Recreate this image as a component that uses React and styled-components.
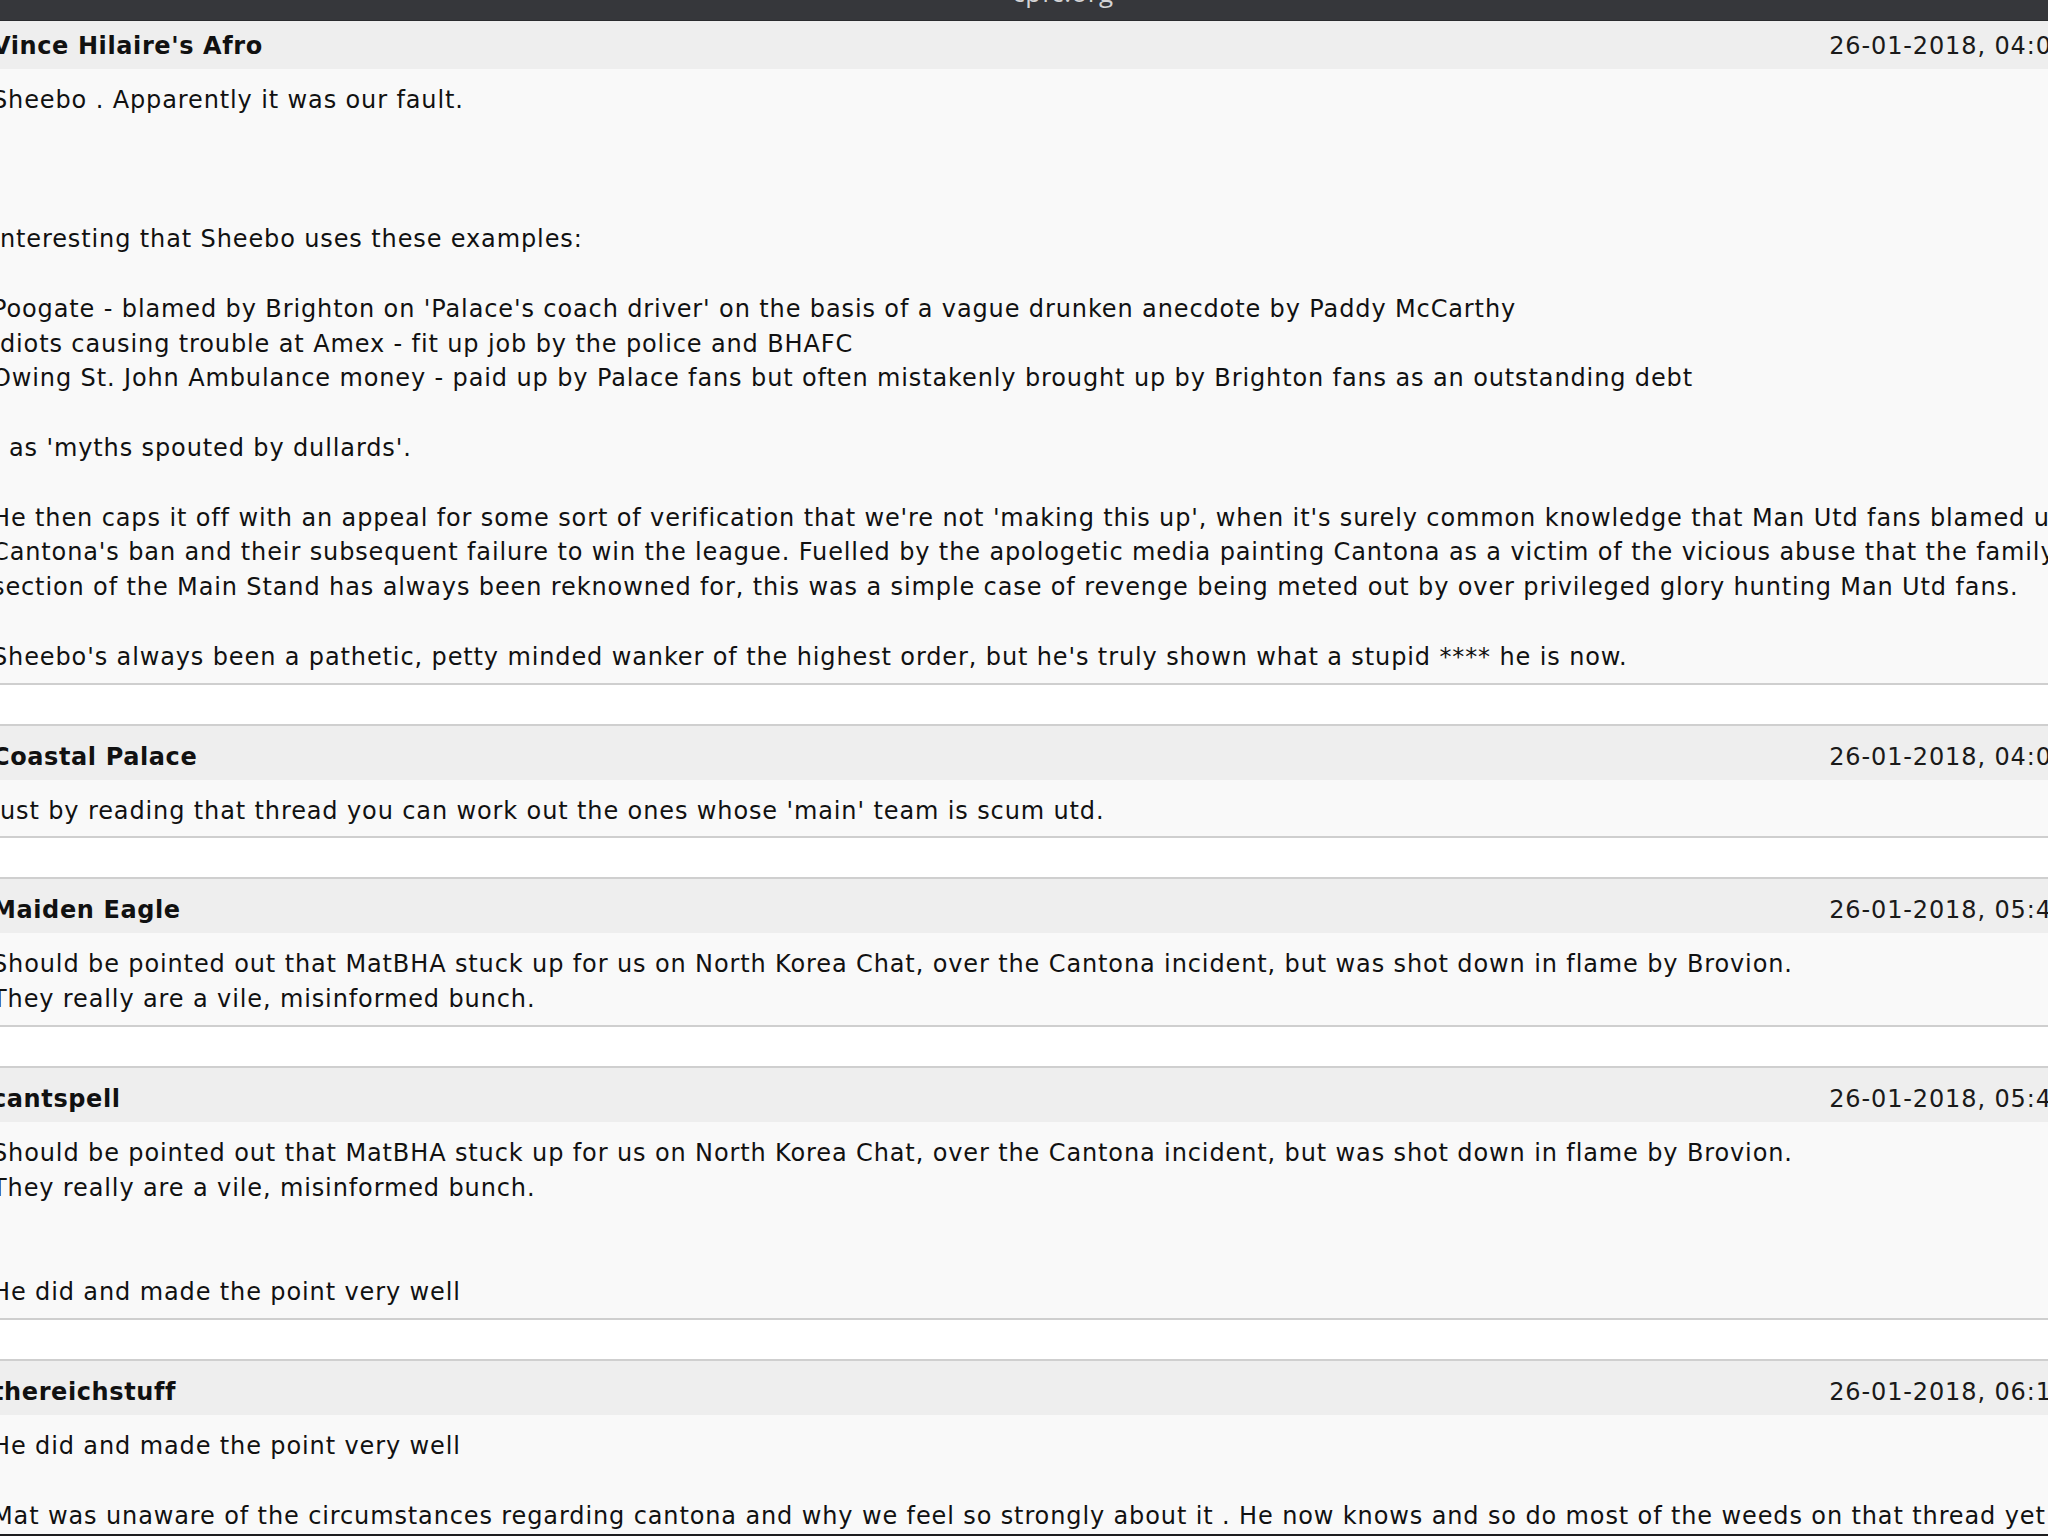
import React from "react";
import styled, { createGlobalStyle } from "styled-components";

const Global = createGlobalStyle`
  html, body {
    margin: 0;
    padding: 0;
    background: #ffffff;
    overflow: hidden;
  }
`

const Page = styled("div")`
  position: relative;
  width: 100vw;
  height: 100vh;
  overflow: hidden;
  font-family: "DejaVu Sans", Verdana, sans-serif;
  font-size: 24px;
  letter-spacing: 0.88px;
  color: #111;

  &::after {
    content: "";
    position: absolute;
    left: 0;
    right: 0;
    bottom: 0;
    height: 2px;
    background: #1e1e20;
  }
`
const TitleBar = styled("div")`
  position: relative;
  z-index: 2;
  height: 20px;
  background: #36373b;
  border-bottom: 1px solid #2a2b2e;
  overflow: hidden;
  text-align: center;
`
const SiteName = styled("div")`
  margin-top: -23px;
  font-family: "Open Sans", "DejaVu Sans", sans-serif;
  font-size: 26px;
  letter-spacing: 0.6px;
  line-height: 30px;
  color: #d4d4d6;
  padding-left: 78px;
`
const Thread = styled("div")`
  margin: -8px -28px 0 -16px;
`
const Post = styled("div")`
  border-top: 2px solid #cfcfcf;
  border-bottom: 2px solid #cfcfcf;
  margin-bottom: 39px;
`
const Head = styled("div")`
  display: flex;
  justify-content: space-between;
  background: #eeeeee;
  padding: 14px 8px 5px;
  line-height: 35px;
  white-space: nowrap;
`
const Name = styled("span")`
  font-weight: bold;
  letter-spacing: 0.6px;
`
const When = styled("span")`
  color: #1a1a1a;
`
const Body = styled("div")`
  background: #f9f9f9;
  padding: 14px 8px 8px;
  line-height: 34.8px;
  white-space: nowrap;
`
const Line = styled("div")`
  min-height: 34.8px;
`

const posts = [
  {
    name: "Vince Hilaire's Afro",
    date: "26-01-2018, 04:02",
    lines: [
      "Sheebo . Apparently it was our fault.",
      "",
      "",
      "",
      "Interesting that Sheebo uses these examples:",
      "",
      "Poogate - blamed by Brighton on 'Palace's coach driver' on the basis of a vague drunken anecdote by Paddy McCarthy",
      "Idiots causing trouble at Amex - fit up job by the police and BHAFC",
      "Owing St. John Ambulance money - paid up by Palace fans but often mistakenly brought up by Brighton fans as an outstanding debt",
      "",
      "\u00a0\u00a0as 'myths spouted by dullards'.",
      "",
      "He then caps it off with an appeal for some sort of verification that we're not 'making this up', when it's surely common knowledge that Man Utd fans blamed us for",
      "Cantona's ban and their subsequent failure to win the league. Fuelled by the apologetic media painting Cantona as a victim of the vicious abuse that the family",
      "section of the Main Stand has always been reknowned for, this was a simple case of revenge being meted out by over privileged glory hunting Man Utd fans.",
      "",
      "Sheebo's always been a pathetic, petty minded wanker of the highest order, but he's truly shown what a stupid **** he is now.",
    ],
  },
  {
    name: "Coastal Palace",
    date: "26-01-2018, 04:08",
    lines: [
      "Just by reading that thread you can work out the ones whose 'main' team is scum utd.",
    ],
  },
  {
    name: "Maiden Eagle",
    date: "26-01-2018, 05:41",
    lines: [
      "Should be pointed out that MatBHA stuck up for us on North Korea Chat, over the Cantona incident, but was shot down in flame by Brovion.",
      "They really are a vile, misinformed bunch.",
    ],
  },
  {
    name: "cantspell",
    date: "26-01-2018, 05:47",
    lines: [
      "Should be pointed out that MatBHA stuck up for us on North Korea Chat, over the Cantona incident, but was shot down in flame by Brovion.",
      "They really are a vile, misinformed bunch.",
      "",
      "",
      "He did and made the point very well",
    ],
  },
  {
    name: "thereichstuff",
    date: "26-01-2018, 06:12",
    lines: [
      "He did and made the point very well",
      "",
      "Mat was unaware of the circumstances regarding cantona and why we feel so strongly about it . He now knows and so do most of the weeds on that thread yet they still deny it.",
    ],
  },
]

const App = () => {
  return (
    <Page>
      <Global />
      <TitleBar>
        <SiteName>cpfc.org</SiteName>
      </TitleBar>
      <Thread>
        {posts.map((p) => (
          <Post key={p.name}>
            <Head>
              <Name>{p.name}</Name>
              <When>{p.date}</When>
            </Head>
            <Body>
              {p.lines.map((l, i) => (
                <Line key={i}>{l}</Line>
              ))}
            </Body>
          </Post>
        ))}
      </Thread>
    </Page>
  )
}

export default App
